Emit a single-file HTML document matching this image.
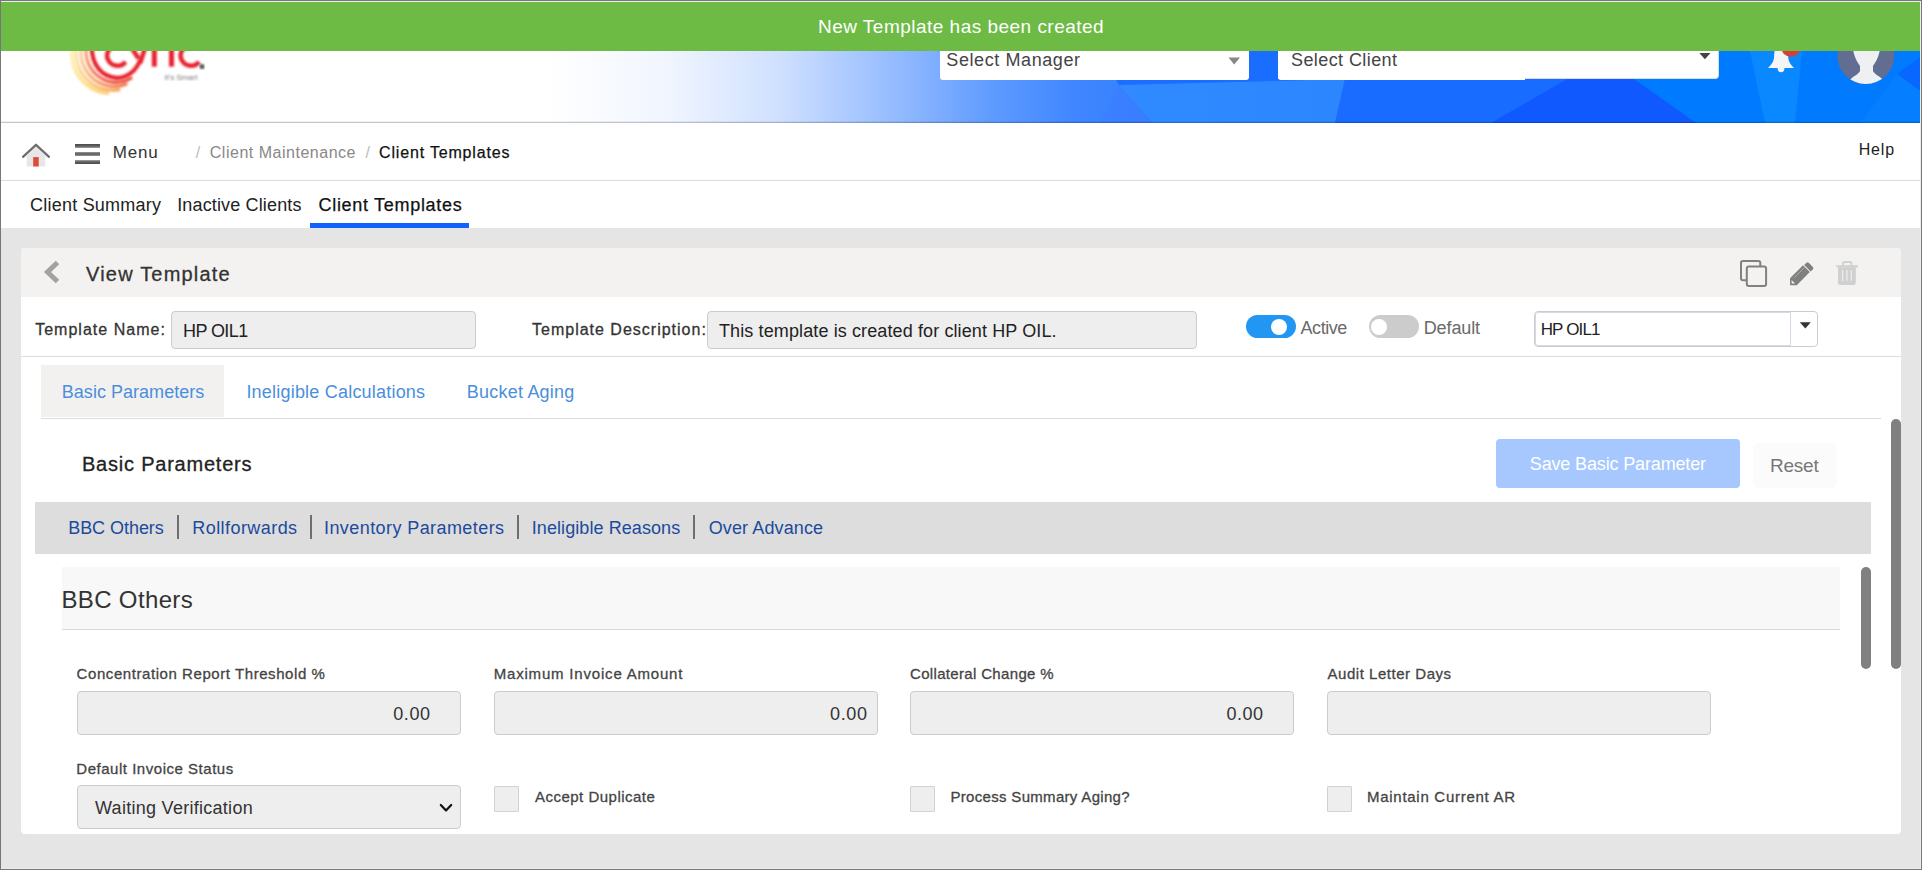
<!DOCTYPE html>
<html lang="en">
<head>
<meta charset="utf-8">
<title>Client Templates - View Template</title>
<style>
html,body{margin:0;padding:0;}
body{width:1922px;height:870px;overflow:hidden;background:#e5e5e5;font-family:"Liberation Sans",sans-serif;}
#page{position:relative;width:1922px;height:870px;overflow:hidden;background:#e5e5e5;}
#page *{box-sizing:border-box;}
.a{position:absolute;}
.t{position:absolute;white-space:pre;font-family:"Liberation Sans",sans-serif;}
/* window frame */
#frame{left:0;top:0;width:1922px;height:870px;border:1px solid #777;z-index:50;pointer-events:none;}
#frame2{left:1px;top:1px;width:1920px;height:868px;border:1px solid #ececec;border-left:none;z-index:49;pointer-events:none;}
/* header */
#hdr{left:1px;top:2px;width:1920px;height:121px;background:#fff;overflow:hidden;}
#hdrline{left:1px;top:121px;width:1920px;height:2px;background:linear-gradient(rgba(0,0,0,0.06) 50%,rgba(0,0,0,0.22) 50%);}
#banner{left:1px;top:2px;width:1920px;height:49px;background:#6dbb45;}
.hsel{background:#fff;border-radius:0 0 3px 3px;}
/* breadcrumb + tabs */
#crumb{left:1px;top:123px;width:1920px;height:58px;background:#fff;border-bottom:1px solid #dcdcdc;}
#tabs{left:1px;top:181px;width:1920px;height:47px;background:#fff;}
#tabline{left:310px;top:223px;width:159px;height:5px;background:#0f62fe;}
.bar{background:#555;height:3.5px;left:75px;width:25px;}
/* card */
#card{left:21px;top:248px;width:1880px;height:586px;background:#fff;border-radius:4px;overflow:hidden;}
#cardhd{left:0;top:0;width:1880px;height:49px;background:#f3f2f1;}
.hline{height:1px;background:#dcdcdc;}
.inp{background:#eee;border:1px solid #ccc;border-radius:4px;}
.chk{background:#eee;border:1px solid #d2d2d2;border-radius:1px;width:25px;height:26px;}
.sep{width:2px;background:#6e6e6e;top:515px;height:24px;}
.thumb{background:#808080;border-radius:5px;width:10px;}

</style>
</head>
<body>
<div id="page">
<!-- app header -->
<div class="a" id="hdr">
  <svg class="a" style="left:0;top:0" width="1920" height="121" viewBox="1 2 1920 121" preserveAspectRatio="none">
    <defs>
      <linearGradient id="hg" gradientUnits="userSpaceOnUse" x1="1" y1="0" x2="1921" y2="0">
        <stop offset="0" stop-color="#ffffff"/>
        <stop offset="0.285" stop-color="#ffffff"/>
        <stop offset="0.348" stop-color="#f0f5ff"/>
        <stop offset="0.406" stop-color="#cfe0ff"/>
        <stop offset="0.471" stop-color="#8fb8ff"/>
        <stop offset="0.516" stop-color="#5f9bff"/>
        <stop offset="0.560" stop-color="#3f86ff"/>
        <stop offset="0.64" stop-color="#2a7bff"/>
        <stop offset="0.74" stop-color="#186dff"/>
        <stop offset="1" stop-color="#0a78ff"/>
      </linearGradient>
    </defs>
    <rect x="1" y="2" width="1920" height="121" fill="url(#hg)"/>
    <polygon points="1119,85 1153,123 1100,123" fill="#3d78ff" opacity="0.35"/>
    <polygon points="1119,85 1345,79 1335,123 1153,123" fill="#2f8cff" opacity="0.8"/>
    <polygon points="1119,85 1100,51 1640,51 1604,57.700 1491,123 1335,123 1345,79" fill="#186cff" opacity="0.9"/>
    <polygon points="1491,123 1604,57.700 1696.400,123" fill="#1059ff"/>
    <polygon points="1604,57.700 1620,51 1922,51 1922,123 1696.400,123" fill="#007aff"/>
    <polygon points="1750,51 1802,51 1795,123 1765,123" fill="#0a88ff"/>
    <polygon points="1897,74 1922,56 1922,92" fill="#0a62ff" opacity="0.75"/>
    <polygon points="1897,74 1922,92 1922,123 1860,123" fill="#0a84ff" opacity="0.5"/>
  </svg>
</div>
<div class="a" id="hdrline"></div>
<!-- logo (partly covered by banner) -->
<svg class="a" style="left:60px;top:20px" width="160" height="90" viewBox="60 20 160 90">
  <defs>
    <linearGradient id="lg2" gradientUnits="userSpaceOnUse" x1="84" y1="60" x2="134" y2="82"><stop offset="0" stop-color="#f7a07a"/><stop offset="0.5" stop-color="#f0624a"/><stop offset="1" stop-color="#ee4f3e"/></linearGradient>
    <linearGradient id="lg3" gradientUnits="userSpaceOnUse" x1="79" y1="60" x2="128" y2="86"><stop offset="0" stop-color="#fbcf9c"/><stop offset="0.5" stop-color="#f7a06e"/><stop offset="1" stop-color="#f2754a"/></linearGradient>
    <linearGradient id="lg4" gradientUnits="userSpaceOnUse" x1="74" y1="60" x2="120" y2="90"><stop offset="0" stop-color="#fde4a8"/><stop offset="0.5" stop-color="#fbc886"/><stop offset="1" stop-color="#f8a862"/></linearGradient>
    <linearGradient id="lg5" gradientUnits="userSpaceOnUse" x1="70" y1="60" x2="108" y2="95"><stop offset="0" stop-color="#fff0b4"/><stop offset="0.6" stop-color="#fde08e"/><stop offset="1" stop-color="#fcd27c"/></linearGradient>
    <filter id="lb" x="-5%" y="-5%" width="110%" height="110%"><feGaussianBlur stdDeviation="0.9"/></filter>
  </defs>
  <g fill="none" stroke-linecap="round" filter="url(#lb)">
    <path d="M107.4 93.1 A39.5 39 0 0 1 75.7 37.8" stroke="url(#lg5)" stroke-width="3.900"/>
    <path d="M118.8 89.8 A37 37 0 0 1 79.5 37.7" stroke="url(#lg4)" stroke-width="3.500"/>
    <path d="M126.0 84.2 A33.5 34 0 0 1 84.1 37.9" stroke="url(#lg3)" stroke-width="3.300"/>
    <path d="M131.0 78.1 A30 31 0 0 1 88.8 38.2" stroke="url(#lg2)" stroke-width="3.300"/>
    <path d="M139.7 61.3 A25 28.5 0 0 1 94.3 37.3" stroke="#e8212e" stroke-width="4.200"/>
    <path d="M147 42 L140.500 62" stroke="#e8212e" stroke-width="4.500"/>
    <path d="M128 42 L137.500 57" stroke="#e8212e" stroke-width="4.500"/>
    <path d="M125.6 61.8 A10.3 10.3 0 1 1 114.0 45.8" stroke="#e8212e" stroke-width="4.500" stroke-linecap="butt"/>
    <path d="M154.300 44 L154.300 66.700" stroke="#e8212e" stroke-width="5" stroke-linecap="butt"/>
    <path d="M171.500 44 L171.500 66.700" stroke="#e8212e" stroke-width="5" stroke-linecap="butt"/>
    <path d="M199.1 61.8 A10.3 10.3 0 1 1 187.5 45.8" stroke="#e8212e" stroke-width="4.500" stroke-linecap="butt"/>
  </g>
  <circle cx="202" cy="66.500" r="2.600" fill="#555" filter="url(#lb)"/>
  <text x="164.500" y="79.500" font-family="Liberation Sans, sans-serif" font-size="6.500" fill="#777" textLength="33" lengthAdjust="spacingAndGlyphs" filter="url(#lb)">It's Smart</text>
</svg>
<!-- header selects -->
<div class="a hsel" style="left:940px;top:40px;width:309px;height:40px;"></div>
<svg class="a" style="left:1228px;top:57px" width="13" height="8" viewBox="0 0 13 8"><polygon points="0.5,0.5 12,0.5 6.2,7.5" fill="#888"/></svg>
<div class="a hsel" style="left:1278px;top:40px;width:440.500px;height:38.500px;border-radius:0 0 4px 0;border:1px solid #d6dcec;border-top:none;background:#fff;"></div>
<div class="a hsel" style="left:1278px;top:40px;width:247px;height:40px;border-radius:0 0 0 3px;"></div>
<svg class="a" style="left:1698px;top:52px" width="14" height="9" viewBox="1698 52 14 9"><polygon points="1699.300,53 1710.500,53 1704.900,59.200" fill="#444"/></svg>
<!-- bell -->
<svg class="a" style="left:1764px;top:30px" width="42" height="46" viewBox="1764 30 42 46">
  <path d="M1781 38 C1775.500 40 1774.500 50 1774 58 C1773.500 62.500 1771 65 1768 68 L1794 68 C1791 65 1788.800 62.500 1788.300 58 C1787.800 50 1786.500 40 1781 38 Z" fill="#f4f5f7"/>
  <circle cx="1781" cy="68.800" r="3.400" fill="#f4f5f7"/>
  <circle cx="1791" cy="46.500" r="10.300" fill="#d2423a"/>
</svg>
<!-- avatar -->
<svg class="a" style="left:1834px;top:24px" width="64" height="64" viewBox="1834 24 64 64">
  <defs><clipPath id="av"><circle cx="1865.800" cy="55.500" r="28.500"/></clipPath></defs>
  <circle cx="1865.800" cy="55.500" r="28.500" fill="#626d92"/>
  <g clip-path="url(#av)" fill="#eef0f2">
    <path d="M1852.500 42 C1852.500 54 1856 60 1860 66 L1860 71 C1858.500 74.500 1853 76 1849 81 L1849 92 L1884 92 L1884 81 C1880 76 1874.500 74.500 1873 71 L1873 66 C1877 60 1880.500 54 1880.500 42 Z"/>
  </g>
</svg>
<!-- success banner -->
<div class="a" id="banner"></div>
<!-- breadcrumb bar -->
<div class="a" id="crumb"></div>
<svg class="a" style="left:20px;top:140px" width="32" height="30" viewBox="20 140 32 30">
  <polygon points="26.700,156 36,147 45.300,156 45.300,166.500 26.700,166.500" fill="#e6e6e6"/>
  <rect x="33.200" y="157.100" width="5.500" height="9.400" fill="#dd4b39"/>
  <polyline points="23,156.800 36,144.800 49,156.800" fill="none" stroke="#6e6e6e" stroke-width="2.300" stroke-linecap="round" stroke-linejoin="round"/>
</svg>
<div class="a bar" style="top:144px;background:linear-gradient(#4a4a4a,#666 60%,#a8a8a8)"></div>
<div class="a bar" style="top:152px;height:4px;background:linear-gradient(#a0a0a0,#6a6a6a 30%,#6a6a6a 70%,#a0a0a0)"></div>
<div class="a bar" style="top:160.300px;background:linear-gradient(#a8a8a8,#666 40%,#4a4a4a)"></div>
<!-- top tabs -->
<div class="a" id="tabs"></div>
<div class="a" id="tabline"></div>
<!-- card -->
<div class="a" id="card">
  <div class="a" id="cardhd"></div>
</div>
<!-- back chevron -->
<svg class="a" style="left:42px;top:259px" width="22" height="26" viewBox="42 259 22 26"><polyline points="57.500,262.500 47.500,272 57.500,281.500" fill="none" stroke="#a2a2a2" stroke-width="5" stroke-linejoin="miter"/></svg>
<!-- header icons -->
<svg class="a" style="left:1736px;top:256px" width="36" height="36" viewBox="1736 256 36 36">
  <rect x="1741" y="261" width="19.300" height="19.300" rx="2" fill="none" stroke="#808080" stroke-width="2"/>
  <rect x="1746.800" y="266.400" width="19.300" height="19.700" rx="2" fill="#f3f2f1" stroke="#808080" stroke-width="2"/>
</svg>
<svg class="a" style="left:1786px;top:258px" width="32" height="32" viewBox="1786 258 32 32">
  <path d="M1790 285.200 L1790 278.300 L1803 265.300 L1809.800 272.100 L1796.800 285.200 Z" fill="#808080"/>
  <path d="M1804.200 265 L1806.500 262.700 Q1807.600 261.800 1808.700 262.800 L1812.900 267 Q1813.800 268.100 1812.900 269.200 L1810.600 271.500 Z" fill="#808080"/>
  <path d="M1791.600 280 L1795 283.500 L1791.600 283.500 Z" fill="#f3f2f1"/>
  <path d="M1794.200 277.800 L1804.300 267.700" stroke="#b5b5b5" stroke-width="0.800" fill="none"/>
</svg>
<svg class="a" style="left:1834px;top:258px" width="28" height="30" viewBox="1834 258 28 30">
  <path d="M1836.300 265.200 L1858 265.200 L1858 267.500 L1836.300 267.500 Z" fill="#d0d0d0"/>
  <path d="M1843 265.500 L1843 263.800 Q1843 262 1844.800 262 L1849.700 262 Q1851.500 262 1851.500 263.800 L1851.500 265.500" fill="none" stroke="#d0d0d0" stroke-width="1.900"/>
  <path d="M1838 267.300 L1855.800 267.300 L1855.800 282.700 Q1855.800 285 1853.500 285 L1840.300 285 Q1838 285 1838 282.700 Z" fill="#d0d0d0"/>
  <g stroke="#ececeb" stroke-width="1.300"><line x1="1842.600" y1="270" x2="1842.600" y2="280.800"/><line x1="1846.900" y1="270" x2="1846.900" y2="280.800"/><line x1="1851.300" y1="270" x2="1851.300" y2="280.800"/></g>
</svg>
<!-- template row -->
<div class="a inp" style="left:171px;top:311px;width:305px;height:38px;"></div>
<div class="a inp" style="left:707px;top:311px;width:490px;height:38px;"></div>
<div class="a" style="left:1245.500px;top:315px;width:50.500px;height:23px;border-radius:12px;background:#2196f3;"></div>
<div class="a" style="left:1270.500px;top:318.500px;width:16px;height:16px;border-radius:8px;background:#fff;"></div>
<div class="a" style="left:1368.500px;top:315px;width:50.500px;height:23px;border-radius:12px;background:#ccc;"></div>
<div class="a" style="left:1370.500px;top:318.500px;width:16px;height:16px;border-radius:8px;background:#fff;"></div>
<div class="a" style="left:1534px;top:311px;width:284px;height:36px;border:1px solid #ccc;border-radius:4px;background:#fff;"></div>
<div class="a" style="left:1535px;top:312px;width:256px;height:34px;border:1px solid #d3d9e6;border-radius:3px 0 0 3px;background:#fff;"></div>
<svg class="a" style="left:1799px;top:321px" width="13" height="9" viewBox="0 0 13 9"><polygon points="0.800,1.300 11.800,1.300 6.300,7.600" fill="#333"/></svg>
<div class="a hline" style="left:21px;top:356px;width:1880px;"></div>
<!-- inner tabs -->
<div class="a" style="left:41px;top:365px;width:183px;height:52px;background:#f3f1f0;"></div>
<div class="a hline" style="left:41px;top:418px;width:1840px;"></div>
<!-- buttons -->
<div class="a" style="left:1496px;top:439px;width:244px;height:49px;background:#a6c8ff;border-radius:4px;"></div>
<div class="a" style="left:1753px;top:443px;width:84px;height:45px;background:#fbfbfb;border-radius:6px;"></div>
<!-- grey nav -->
<div class="a" style="left:35px;top:502px;width:1836px;height:51.500px;background:#ddd;"></div>
<div class="a sep" style="left:177px"></div>
<div class="a sep" style="left:310px"></div>
<div class="a sep" style="left:517px"></div>
<div class="a sep" style="left:693px"></div>
<!-- section header -->
<div class="a" style="left:62px;top:567px;width:1778px;height:62.500px;background:#f8f8f8;border-bottom:1px solid #d8d8d8;"></div>
<!-- scrollbars -->
<div class="a thumb" style="left:1891px;top:419px;height:250px;"></div>
<div class="a thumb" style="left:1861px;top:566.500px;height:102.500px;"></div>
<!-- form row 1 -->
<div class="a inp" style="left:77px;top:691px;width:384px;height:44px;"></div>
<div class="a inp" style="left:494px;top:691px;width:384px;height:44px;"></div>
<div class="a inp" style="left:910px;top:691px;width:384px;height:44px;"></div>
<div class="a inp" style="left:1327px;top:691px;width:384px;height:44px;"></div>
<!-- form row 2 -->
<div class="a inp" style="left:77px;top:785px;width:384px;height:43.500px;"></div>
<svg class="a" style="left:438.400px;top:801px" width="16" height="14" viewBox="0 0 16 14"><polyline points="2.800,4 8,9.400 13.200,4" fill="none" stroke="#111" stroke-width="2.200" stroke-linecap="round" stroke-linejoin="round"/></svg>
<div class="a chk" style="left:494px;top:786px;"></div>
<div class="a chk" style="left:910px;top:786px;"></div>
<div class="a chk" style="left:1327px;top:786px;"></div>
<!-- frame -->
<div class="a" id="frame2"></div>
<div class="a" id="frame"></div>

<!-- text layer -->
<span class="t" style="left:818.0px;top:17px;font-size:19px;line-height:19px;color:#ffffff;letter-spacing:0.482px;">New Template has been created</span>
<span class="t" style="left:946.3px;top:51px;font-size:18px;line-height:18px;color:#444444;letter-spacing:0.592px;">Select Manager</span>
<span class="t" style="left:1291.0px;top:51px;font-size:18px;line-height:18px;color:#444444;letter-spacing:0.417px;">Select Client</span>
<span class="t" style="left:112.8px;top:144px;font-size:17px;line-height:17px;color:#333333;letter-spacing:0.833px;">Menu</span>
<span class="t" style="left:195.8px;top:145px;font-size:16px;line-height:16px;color:#bbbbbb;">/</span>
<span class="t" style="left:209.8px;top:145px;font-size:16px;line-height:16px;color:#888888;letter-spacing:0.515px;">Client Maintenance</span>
<span class="t" style="left:365.5px;top:145px;font-size:16px;line-height:16px;color:#bbbbbb;">/</span>
<span class="t" style="left:379.0px;top:145px;font-size:16px;line-height:16px;color:#111111;-webkit-text-stroke:0.25px currentColor;letter-spacing:0.833px;">Client Templates</span>
<span class="t" style="left:1858.7px;top:142px;font-size:16px;line-height:16px;color:#222222;letter-spacing:0.833px;">Help</span>
<span class="t" style="left:30.0px;top:196px;font-size:18px;line-height:18px;color:#222222;letter-spacing:0.231px;">Client Summary</span>
<span class="t" style="left:177.2px;top:196px;font-size:18px;line-height:18px;color:#222222;letter-spacing:0.147px;">Inactive Clients</span>
<span class="t" style="left:318.5px;top:196px;font-size:18px;line-height:18px;color:#111111;-webkit-text-stroke:0.25px currentColor;letter-spacing:0.700px;">Client Templates</span>
<span class="t" style="left:86.1px;top:264px;font-size:20px;line-height:20px;color:#333333;-webkit-text-stroke:0.3px currentColor;letter-spacing:1.175px;">View Template</span>
<span class="t" style="left:35.2px;top:322px;font-size:16px;line-height:16px;color:#333333;-webkit-text-stroke:0.3px currentColor;letter-spacing:1.015px;">Template Name:</span>
<span class="t" style="left:183.0px;top:322px;font-size:18px;line-height:18px;color:#222222;letter-spacing:-0.583px;">HP OIL1</span>
<span class="t" style="left:532.0px;top:322px;font-size:16px;line-height:16px;color:#333333;-webkit-text-stroke:0.3px currentColor;letter-spacing:1.000px;">Template Description:</span>
<span class="t" style="left:719.0px;top:322px;font-size:18px;line-height:18px;color:#222222;letter-spacing:0.114px;">This template is created for client HP OIL.</span>
<span class="t" style="left:1300.6px;top:319px;font-size:18px;line-height:18px;color:#6a6a6a;letter-spacing:-0.480px;">Active</span>
<span class="t" style="left:1423.7px;top:319px;font-size:18px;line-height:18px;color:#6a6a6a;letter-spacing:-0.100px;">Default</span>
<span class="t" style="left:1540.7px;top:321px;font-size:17px;line-height:17px;color:#222222;letter-spacing:-0.850px;">HP OIL1</span>
<span class="t" style="left:61.8px;top:383px;font-size:18px;line-height:18px;color:#4a8fdb;letter-spacing:0.027px;">Basic Parameters</span>
<span class="t" style="left:246.4px;top:383px;font-size:18px;line-height:18px;color:#4a8fdb;letter-spacing:0.209px;">Ineligible Calculations</span>
<span class="t" style="left:466.7px;top:383px;font-size:18px;line-height:18px;color:#4a8fdb;letter-spacing:0.236px;">Bucket Aging</span>
<span class="t" style="left:82.0px;top:454px;font-size:20px;line-height:20px;color:#222222;-webkit-text-stroke:0.3px currentColor;letter-spacing:0.780px;">Basic Parameters</span>
<span class="t" style="left:1529.8px;top:455px;font-size:18px;line-height:18px;color:#ffffff;letter-spacing:-0.147px;">Save Basic Parameter</span>
<span class="t" style="left:1769.9px;top:456px;font-size:19px;line-height:19px;color:#777777;letter-spacing:-0.200px;">Reset</span>
<span class="t" style="left:68.2px;top:519px;font-size:18px;line-height:18px;color:#1c4a9c;letter-spacing:-0.044px;">BBC Others</span>
<span class="t" style="left:192.3px;top:519px;font-size:18px;line-height:18px;color:#1c4a9c;letter-spacing:0.436px;">Rollforwards</span>
<span class="t" style="left:324.0px;top:519px;font-size:18px;line-height:18px;color:#1c4a9c;letter-spacing:0.421px;">Inventory Parameters</span>
<span class="t" style="left:531.8px;top:519px;font-size:18px;line-height:18px;color:#1c4a9c;letter-spacing:0.076px;">Ineligible Reasons</span>
<span class="t" style="left:708.7px;top:519px;font-size:18px;line-height:18px;color:#1c4a9c;letter-spacing:0.118px;">Over Advance</span>
<span class="t" style="left:61.4px;top:588px;font-size:24px;line-height:24px;color:#333333;letter-spacing:0.367px;">BBC Others</span>
<span class="t" style="left:76.6px;top:666px;font-size:15px;line-height:15px;color:#444444;-webkit-text-stroke:0.3px currentColor;letter-spacing:0.568px;">Concentration Report Threshold %</span>
<span class="t" style="left:493.7px;top:666px;font-size:15px;line-height:15px;color:#444444;-webkit-text-stroke:0.3px currentColor;letter-spacing:0.810px;">Maximum Invoice Amount</span>
<span class="t" style="left:910.0px;top:666px;font-size:15px;line-height:15px;color:#444444;-webkit-text-stroke:0.3px currentColor;letter-spacing:0.333px;">Collateral Change %</span>
<span class="t" style="left:1327.5px;top:666px;font-size:15px;line-height:15px;color:#444444;-webkit-text-stroke:0.3px currentColor;letter-spacing:0.531px;">Audit Letter Days</span>
<span class="t" style="left:393.3px;top:705px;font-size:18px;line-height:18px;color:#333333;letter-spacing:0.567px;">0.00</span>
<span class="t" style="left:830.0px;top:705px;font-size:18px;line-height:18px;color:#333333;letter-spacing:0.667px;">0.00</span>
<span class="t" style="left:1226.5px;top:705px;font-size:18px;line-height:18px;color:#333333;letter-spacing:0.500px;">0.00</span>
<span class="t" style="left:76.3px;top:761px;font-size:15px;line-height:15px;color:#444444;-webkit-text-stroke:0.3px currentColor;letter-spacing:0.524px;">Default Invoice Status</span>
<span class="t" style="left:95.0px;top:799px;font-size:18px;line-height:18px;color:#333333;letter-spacing:0.279px;">Waiting Verification</span>
<span class="t" style="left:535.0px;top:789px;font-size:15px;line-height:15px;color:#444444;-webkit-text-stroke:0.3px currentColor;letter-spacing:0.487px;">Accept Duplicate</span>
<span class="t" style="left:950.5px;top:789px;font-size:15px;line-height:15px;color:#444444;-webkit-text-stroke:0.3px currentColor;letter-spacing:0.310px;">Process Summary Aging?</span>
<span class="t" style="left:1367.0px;top:789px;font-size:15px;line-height:15px;color:#444444;-webkit-text-stroke:0.3px currentColor;letter-spacing:0.722px;">Maintain Current AR</span>
</div>
</body>
</html>
